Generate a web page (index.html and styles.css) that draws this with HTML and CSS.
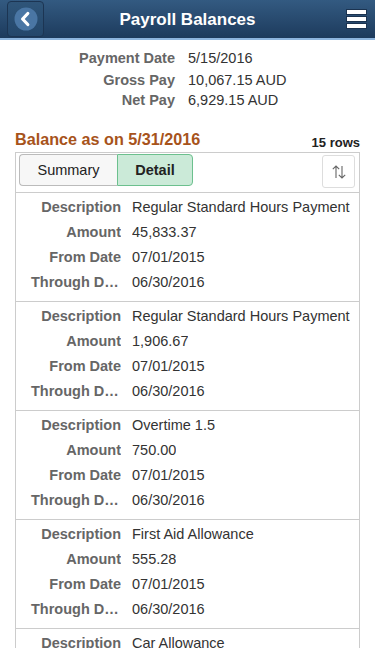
FILE: index.html
```html
<!DOCTYPE html>
<html lang="en">

<head>
  <meta charset="UTF-8" />
  <meta name="viewport" content="width=device-width, initial-scale=1.0" />
  <title>Payroll Balances</title>
  <link rel="stylesheet" href="styles.css">
</head>

<body>
  <header class="topbar">
    <button class="back-btn" aria-label="Back">
      <svg width="24" height="24" viewBox="0 0 24 24">
        <circle cx="12" cy="12" r="11.5" fill="#4a76a4" />
        <path d="M13.8 6.5 L8.6 12 L13.8 17.5" fill="none" stroke="#fff" stroke-width="3.2" stroke-linecap="round" stroke-linejoin="round" />
      </svg>
    </button>
    <h1 class="title">Payroll Balances</h1>
    <button class="menu-btn" aria-label="Menu">
      <span></span><span></span><span></span>
    </button>
  </header>

  <main class="content">
    <div class="summary">
      <div class="sum-row first"><span class="sum-label">Payment Date</span><span class="sum-value">5/15/2016</span></div>
      <div class="sum-row"><span class="sum-label">Gross Pay</span><span class="sum-value">10,067.15 AUD</span></div>
      <div class="sum-row"><span class="sum-label">Net Pay</span><span class="sum-value">6,929.15 AUD</span></div>
    </div>

    <div class="grid-head">
      <h2 class="grid-title">Balance as on 5/31/2016</h2>
      <span class="row-count">15 rows</span>
    </div>

    <div class="grid">
      <div class="toolbar">
        <div class="tabs">
          <button class="tab">Summary</button>
          <button class="tab active">Detail</button>
        </div>
        <button class="sort-btn" aria-label="Sort">
          <svg width="16" height="16" viewBox="0 0 16 16" fill="none" stroke="#666" stroke-width="1.1">
            <path d="M5 14 V2 M1.8 5.2 L5 2 L8.2 5.2" />
            <path d="M11 2 V14 M7.8 10.8 L11 14 L14.2 10.8" />
          </svg>
        </button>
      </div>

      <div class="group">
        <div class="row"><span class="label">Description</span><span class="value">Regular Standard Hours Payment</span></div>
        <div class="row"><span class="label">Amount</span><span class="value">45,833.37</span></div>
        <div class="row"><span class="label">From Date</span><span class="value">07/01/2015</span></div>
        <div class="row"><span class="label">Through Date</span><span class="value">06/30/2016</span></div>
      </div>
      <div class="group">
        <div class="row"><span class="label">Description</span><span class="value">Regular Standard Hours Payment</span></div>
        <div class="row"><span class="label">Amount</span><span class="value">1,906.67</span></div>
        <div class="row"><span class="label">From Date</span><span class="value">07/01/2015</span></div>
        <div class="row"><span class="label">Through Date</span><span class="value">06/30/2016</span></div>
      </div>
      <div class="group">
        <div class="row"><span class="label">Description</span><span class="value">Overtime 1.5</span></div>
        <div class="row"><span class="label">Amount</span><span class="value">750.00</span></div>
        <div class="row"><span class="label">From Date</span><span class="value">07/01/2015</span></div>
        <div class="row"><span class="label">Through Date</span><span class="value">06/30/2016</span></div>
      </div>
      <div class="group">
        <div class="row"><span class="label">Description</span><span class="value">First Aid Allowance</span></div>
        <div class="row"><span class="label">Amount</span><span class="value">555.28</span></div>
        <div class="row"><span class="label">From Date</span><span class="value">07/01/2015</span></div>
        <div class="row"><span class="label">Through Date</span><span class="value">06/30/2016</span></div>
      </div>
      <div class="group">
        <div class="row"><span class="label">Description</span><span class="value">Car Allowance</span></div>
      </div>
    </div>
  </main>
  <div class="footer"></div>
</body>

</html>
```

FILE: styles.css
```css
* {
  margin: 0;
  padding: 0;
  box-sizing: border-box;
}

body {
  background-color: #fff;
  font-family: 'Liberation Sans', Arial, sans-serif;
  height: 667px;
  display: flex;
  flex-direction: column;
  overflow: hidden;
}

/* header bar */
.topbar {
  height: 40px;
  flex-shrink: 0;
  display: grid;
  grid-template-columns: 1fr auto 1fr;
  align-items: center;
  padding: 0 7px 2px 7px;
  background: linear-gradient(#335a81, #1d3b5d);
  border-bottom: 2px solid #8db5de;
}

.back-btn {
  width: 37px;
  height: 36px;
  margin-top: 1px;
  border: 1px solid #1c3553;
  border-radius: 4px;
  background: linear-gradient(#2f5579, #24476b);
  display: flex;
  align-items: center;
  justify-content: center;
}

.back-btn svg {
  display: block;
}

.title {
  color: #fff;
  font-size: 17px;
  font-weight: bold;
  margin-top: 2px;
}

.menu-btn {
  justify-self: end;
  width: 21px;
  height: 20px;
  border: none;
  background: none;
  display: flex;
  flex-direction: column;
  justify-content: space-between;
  margin-right: 1px;
}

.menu-btn span {
  display: block;
  height: 6px;
  background: #fff;
  border: 1px solid #1b3350;
}

/* scrolling content */
.content {
  height: 608px;
  overflow: hidden;
  padding: 0 15px;
}

.summary {
  padding-top: 8px;
}

.sum-row {
  display: flex;
  gap: 13px;
  font-size: 14.5px;
  line-height: 20px;
}

.sum-row.first {
  margin-bottom: 2px;
}

.sum-label {
  width: 160px;
  text-align: right;
  color: #666;
  font-weight: bold;
}

.sum-value {
  color: #333;
}

.grid-head {
  display: flex;
  justify-content: space-between;
  align-items: flex-end;
  margin-top: 17px;
  height: 22px;
}

.grid-title {
  color: #a7531b;
  font-size: 16.2px;
  font-weight: bold;
  line-height: 20px;
}

.row-count {
  font-size: 13px;
  font-weight: bold;
  color: #222;
  line-height: 15px;
  margin-bottom: -1px;
}

.grid {
  border: 1px solid #ccc;
  border-bottom: none;
  margin-top: 3px;
}

.toolbar {
  display: flex;
  justify-content: space-between;
  align-items: flex-start;
  padding: 1px 4px 4px 3px;
  border-bottom: 1px solid #ccc;
}

.tabs {
  display: flex;
}

.tab {
  height: 32px;
  font-family: 'Liberation Sans', Arial, sans-serif;
  font-size: 14.5px;
  color: #222;
  background: #f7f7f7;
  border: 1px solid #bbb;
}

.tab:first-child {
  width: 98px;
  border-radius: 4px 0 0 4px;
  border-right: none;
}

.tab.active {
  width: 76px;
  font-weight: bold;
  background: #cbead8;
  border-color: #6cc08e;
  border-radius: 0 4px 4px 0;
}

.sort-btn {
  width: 33px;
  height: 33px;
  margin-top: 1px;
  border: 1px solid #ddd;
  border-radius: 3px;
  background: #fff;
  display: flex;
  align-items: center;
  justify-content: center;
}

.group {
  padding: 2px 0 6px 0;
  border-bottom: 1px solid #ccc;
}

.row {
  display: flex;
  gap: 11px;
  font-size: 14.5px;
  line-height: 25px;
}

.label {
  width: 105px;
  flex-shrink: 0;
  padding-left: 15px;
  text-align: right;
  color: #666;
  font-weight: bold;
  white-space: nowrap;
  overflow: hidden;
  text-overflow: ellipsis;
}

.value {
  color: #333;
  white-space: nowrap;
  overflow: hidden;
}

.footer {
  flex: 1;
}
```
